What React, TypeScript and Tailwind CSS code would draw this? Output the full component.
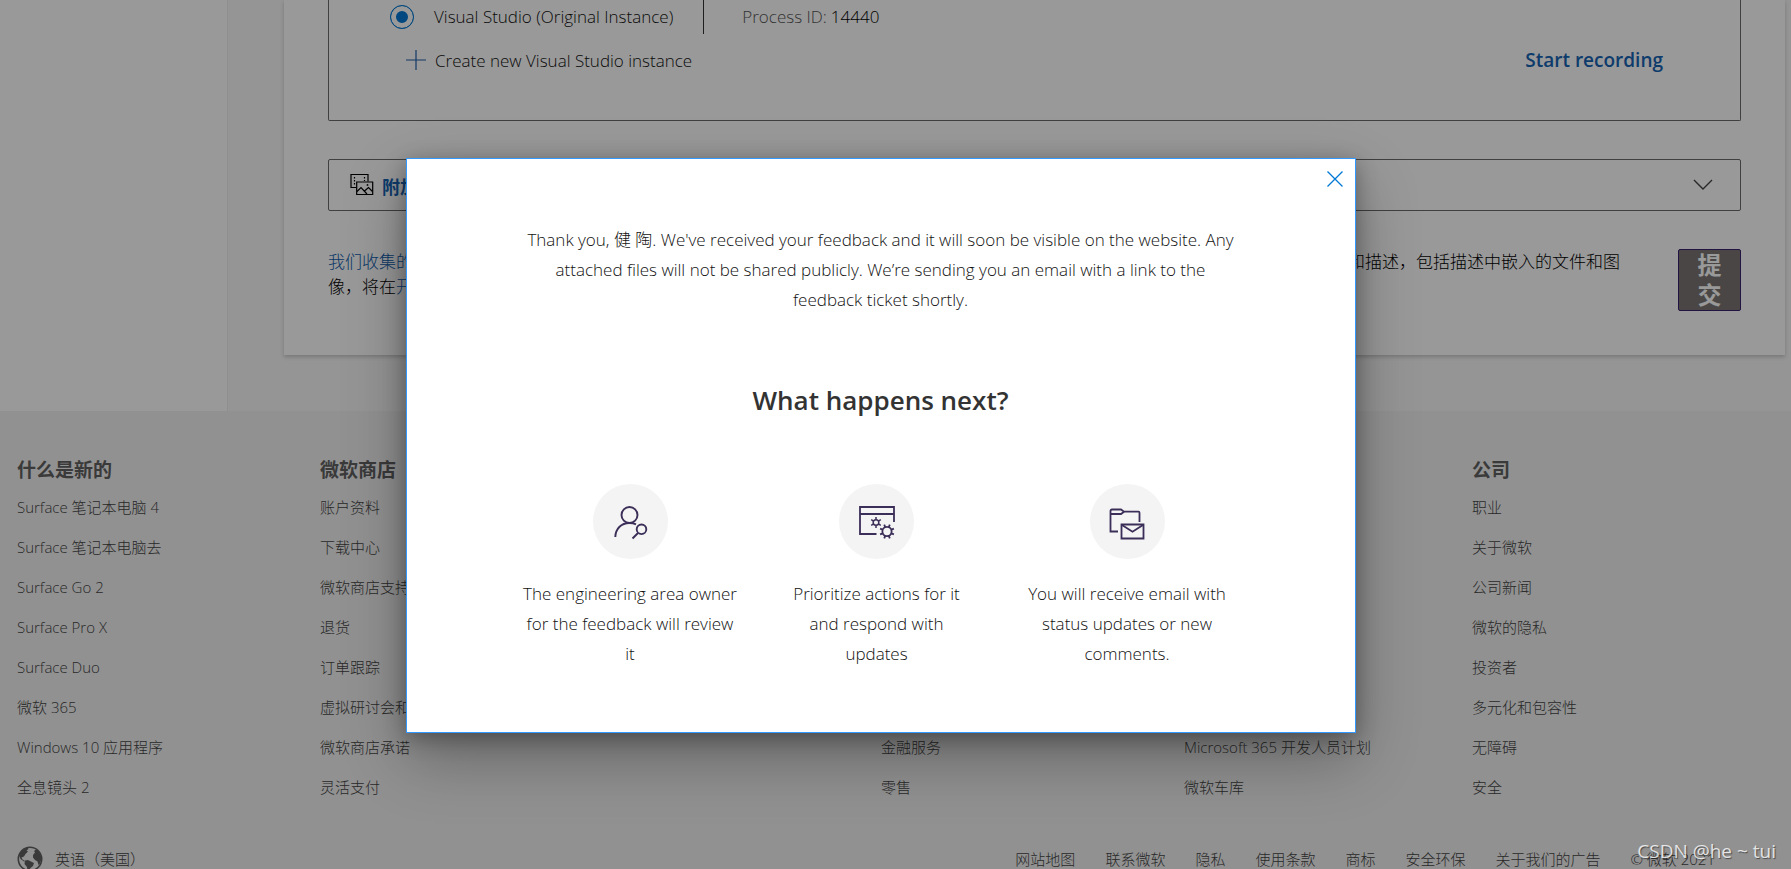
import type { ReactNode } from 'react';

interface LinkColumn {
  title: string;
  links: string[];
}

const columns: LinkColumn[] = [
  {
    title: '什么是新的',
    links: ['Surface 笔记本电脑 4', 'Surface 笔记本电脑去', 'Surface Go 2', 'Surface Pro X', 'Surface Duo', '微软 365', 'Windows 10 应用程序', '全息镜头 2'],
  },
  {
    title: '微软商店',
    links: ['账户资料', '下载中心', '微软商店支持', '退货', '订单跟踪', '虚拟研讨会和培训', '微软商店承诺', '灵活支付'],
  },
  {
    title: '教育',
    links: ['微软教育', '教育设备', '微软团队教育', '教育工作者培训', '学生和家长优惠', '学生 Azure'],
  },
  {
    title: '企业',
    links: ['天蓝色', '应用源', '汽车', '政府', '卫生保健', '制造业', '金融服务', '零售'],
  },
  {
    title: '开发人员',
    links: ['视窗开发', '开发中心', '文档', '学习', '频道 9', '办公室', 'Microsoft 365 开发人员计划', '微软车库'],
  },
  {
    title: '公司',
    links: ['职业', '关于微软', '公司新闻', '微软的隐私', '投资者', '多元化和包容性', '无障碍', '安全'],
  },
];

const legalLinks = ['网站地图', '联系微软', '隐私', '使用条款', '商标', '安全环保', '关于我们的广告'];

function MediaIcon() {
  return (
    <svg className="w-6 h-6" viewBox="0 0 24 24" fill="none" stroke="#000" strokeWidth="1.2" aria-hidden="true">
      <path d="M6 14.500H1V1.500h17V8.500" />
      <path d="M4.500 4v9M14.500 4v4" strokeDasharray="1.500 1.500" />
      <path d="M6.700 9h16v12.500h-16z" />
      <path d="M7 18.500l4-4 6 6.500M14.500 18l4-3.500 4 4" />
      <circle cx="17.500" cy="12" r="0.300" />
    </svg>
  );
}

function GlobeIcon() {
  return (
    <svg className="w-[26px] h-[26px]" viewBox="0 0 26 26" aria-hidden="true">
      <circle cx="13" cy="13" r="11.700" fill="none" stroke="#616161" strokeWidth="1.600" />
      <path
        fill="#616161"
        d="M2 9.500C3.500 5 6.500 2.500 10.500 1.500l1 1.500-2 1.500 1.500 1-2.500 2.500-1.500 2.500-2.500 1 1 2 2.500 1.500-1 .5-3.500-2.500zM8 14.500l3-.5 3 1.500 3 1.500-1 3-2.500 2-1 2.500-2 .5-.5-4-2.500-3zM16 9l2-2.500-1-1.500 2-1.500c3 2 5.500 5.500 5.500 9.500l-1.500 4.500-1.500 1.500-1-3.500-2.500-1.500-2-2.500z"
      />
    </svg>
  );
}

function OwnerIcon() {
  return (
    <svg className="w-9 h-9" viewBox="0 0 36 36" fill="none" stroke="#3b2e58" strokeWidth="1.900" aria-hidden="true">
      <circle cx="17.500" cy="11" r="8" />
      <path d="M3.300 33C3.500 25 9 19 17.500 19c2.500 0 4.500.4 6.500 1.300" />
      <circle cx="29.500" cy="25.300" r="4.800" />
      <path d="M26 29l-5.500 5.500" />
    </svg>
  );
}

function ActionsIcon() {
  return (
    <svg className="w-9 h-9" viewBox="0 0 36 36" fill="none" stroke="#3b2e58" strokeWidth="1.800" aria-hidden="true">
      <path d="M17.500 30H1V3h34v15M1 10h34" />
      <circle cx="17" cy="18.500" r="2.800" strokeWidth="1.500" />
      <path strokeWidth="1.500" d="M17 15.700v-2.700M17 21.300V24M19.400 17.100l2.400-1.400M14.600 19.900l-2.400 1.400M19.400 19.900l2.400 1.400M14.600 17.100l-2.400-1.400" />
      <circle cx="28" cy="27.500" r="4.600" />
      <path d="M29.800 23.100l1-2.500M26.200 23.100l-1-2.500M32.400 25.700l2.500-1M32.400 29.300l2.500 1M29.800 31.900l1 2.500M26.200 31.900l-1 2.500M23.600 29.300l-2.500 1M23.600 25.700l-2.500-1" />
    </svg>
  );
}

function EmailIcon() {
  return (
    <svg className="w-9 h-9" viewBox="0 0 36 36" fill="none" stroke="#3b2e58" strokeWidth="1.800" aria-hidden="true">
      <path d="M9 27.500H1.500V7Q1.500 5.500 3 5.500H12l3 2.200h14.500q1 0 1 1V18" />
      <path d="M1.500 10H12l3-2.300" />
      <path d="M12.500 20.500h22V34.500h-22z" />
      <path d="M13 21l10.500 6.800L34 21" />
    </svg>
  );
}

interface StepProps {
  icon: ReactNode;
  text: string;
  width: string;
}

function Step({ icon, text, width }: StepProps) {
  return (
    <li className="flex flex-col items-center">
      <div className="w-[75px] h-[75px] rounded-full bg-[#f4f4f4] flex items-center justify-center">
        {icon}
      </div>
      <p className={`mt-5 leading-[30px] text-center ${width}`}>{text}</p>
    </li>
  );
}

function FeedbackForm() {
  return (
    <main className="flex h-[411px] bg-[#f8f8f8]">
      <aside className="w-[228px] shrink-0 bg-white border-r border-[#eeeeee]" />
      <section className="flex-1 ml-14 mr-1.5 mb-14 px-11 bg-white shadow-[0_2px_4px_rgba(0,0,0,0.2)] text-[17px]">
        <div className="h-[121px] border border-t-0 border-[#6b6b6b] rounded-b-xs text-[#111]">
          <div className="flex h-[34px] pl-[61px]">
            <label className="flex items-center gap-5 pr-[30px] border-r border-[#333]">
              <input
                type="radio"
                name="instance"
                defaultChecked
                className="appearance-none w-6 h-6 rounded-full border border-[#0078d4] bg-[#0078d4] shadow-[inset_0_0_0_5px_#fff]"
              />
              Visual Studio (Original Instance)
            </label>
            <p className="flex items-center gap-1 pl-[38px] text-[#555]">
              Process ID: <span className="text-black">14440</span>
            </p>
          </div>
          <div className="flex items-center justify-between mt-3 pl-[76px] pr-[77px]">
            <button type="button" className="flex items-center gap-2">
              <svg className="w-[22px] h-[22px]" viewBox="0 0 22 22" stroke="#1f5fae" strokeWidth="1.200" aria-hidden="true">
                <path d="M11 1v20M1 11h20" />
              </svg>
              Create new Visual Studio instance
            </button>
            <button type="button" className="text-[19px] font-semibold text-[#1664b5]">Start recording</button>
          </div>
        </div>

        <button type="button" className="mt-[38px] w-full h-[52px] pl-[21px] pr-[27px] flex items-center border border-[#6b6b6b] rounded-xs">
          <MediaIcon />
          <span className="ml-2 pt-1 text-[18px] font-bold text-[#1664b5]">附加屏幕截图或文件</span>
          <svg className="ml-auto w-5 h-3" viewBox="0 0 20 12" fill="none" stroke="#444" strokeWidth="1.400" aria-hidden="true">
            <path d="M1 1l9 9 9-9" />
          </svg>
        </button>

        <div className="flex items-start mt-[38px]">
          <p className="flex-1 pr-12 leading-[25px] text-black">
            <a href="#privacy" className="text-[#0f5cad]">我们收集的其他诊断信息</a>
            和附加文件受到微软隐私声明的保护，并且只会供产品工程团队在调查和解决问题时使用。另外，您的反馈标题和描述，包括描述中嵌入的文件和图像，将在
            <a href="#community" className="text-[#0f5cad]">开发者社区</a>公开。
          </p>
          <button type="submit" className="w-[63px] px-4 bg-[#7a7673] border border-[#3b2070] rounded-xs text-2xl leading-[30px] font-bold text-white">
            提交
          </button>
        </div>
      </section>
    </main>
  );
}

function Footer() {
  return (
    <footer className="bg-[#f2f2f2] pt-[45px] px-[17px] text-[15px] text-[#444]">
      <div className="grid grid-cols-[303fr_281fr_280fr_303fr_288fr_302fr]">
        {columns.map((column) => (
          <div key={column.title}>
            <h3 className="text-[19px] leading-7 font-bold text-[#616161]">{column.title}</h3>
            <ul className="mt-[3px]">
              {column.links.map((link) => (
                <li key={link} className="h-10 leading-10">
                  <a href="#store">{link}</a>
                </li>
              ))}
            </ul>
          </div>
        ))}
      </div>
      <div className="flex items-center justify-between mt-9 pr-[59px] h-8">
        <a href="#locale" className="flex items-center gap-3">
          <GlobeIcon />
          英语（美国）
        </a>
        <ul className="flex gap-[30px]">
          {legalLinks.map((link) => (
            <li key={link}>
              <a href="#legal">{link}</a>
            </li>
          ))}
          <li>© 微软 2021</li>
        </ul>
      </div>
    </footer>
  );
}

function ThankYouDialog() {
  return (
    <div className="absolute inset-0 flex items-start justify-center bg-black/40 pt-[158px] pr-[30px]">
      <div
        role="dialog"
        aria-labelledby="next-title"
        className="w-full max-w-[950px] relative bg-white border border-[#3399ff] px-[101px] pt-[66px] pb-[63px] text-[17px] text-[#111] shadow-[0_25px_58px_rgba(0,0,0,0.3),0_5px_20px_rgba(0,0,0,0.3)]"
      >
        <button type="button" aria-label="Close" className="absolute top-3 right-3">
          <svg className="w-4 h-4" viewBox="0 0 16 16" stroke="#0078d4" strokeWidth="1.300" aria-hidden="true">
            <path d="M.5.5l15 15M15.500.5l-15 15" />
          </svg>
        </button>
        <p className="px-4 leading-[30px] text-center">
          Thank you, 健 陶. We've received your feedback and it will soon be visible on the website. Any attached
          files will not be shared publicly. We’re sending you an email with a link to the feedback ticket shortly.
        </p>
        <h2 id="next-title" className="mt-[65px] text-[26px] leading-10 font-semibold text-center text-[#333]">
          What happens next?
        </h2>
        <ul className="grid grid-cols-[245fr_248fr_253fr] mt-16">
          <Step icon={<OwnerIcon />} text="The engineering area owner for the feedback will review it" width="max-w-54" />
          <Step icon={<ActionsIcon />} text="Prioritize actions for it and respond with updates" width="max-w-44" />
          <Step icon={<EmailIcon />} text="You will receive email with status updates or new comments." width="max-w-52" />
        </ul>
      </div>
    </div>
  );
}

export default function App() {
  return (
    <div className="relative h-screen overflow-hidden font-light font-['Open_Sans','Noto_Sans_CJK_SC',sans-serif]">
      <FeedbackForm />
      <Footer />
      <ThankYouDialog />
      <span className="absolute right-[15px] bottom-1 text-[19px] leading-7 font-normal text-white/80 [text-shadow:1px_1px_1px_rgba(0,0,0,0.5)]">
        CSDN @he ~ tui
      </span>
    </div>
  );
}
